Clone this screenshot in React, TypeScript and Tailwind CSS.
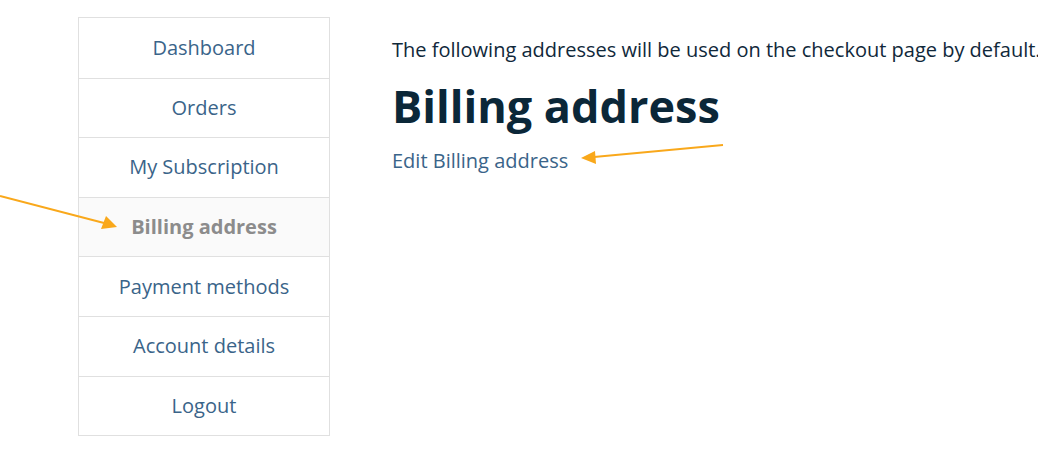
import React from "react"

const items = [
  "Dashboard",
  "Orders",
  "My Subscription",
  "Billing address",
  "Payment methods",
  "Account details",
  "Logout",
]

const active = "Billing address"

export default function App() {
  return (
    <div
      className="relative w-[1038px] h-[457px] bg-white overflow-hidden"
      style={{ fontFamily: '"Open Sans", sans-serif' }}
    >
      <div className="flex pl-[78px] pt-[17px] gap-[62px]">
        <ul className="w-[252px] shrink-0 border border-[#e0e0e0]">
          {items.map((item, i) => (
            <li
              key={item}
              className={
                "h-[59.6px] flex items-center justify-center text-[20px] " +
                (i > 0 ? "border-t border-[#e0e0e0] " : "") +
                (item === active
                  ? "bg-[#fafafa] text-[#8c8c8c] font-bold"
                  : "text-[#3a6489]")
              }
            >
              {item}
            </li>
          ))}
        </ul>
        <div className="pt-[19px] text-[#10283a]">
          <p className="text-[20px] leading-[28px] whitespace-nowrap">
            The following addresses will be used on the checkout page by default.
          </p>
          <h2 className="text-[45px] font-bold leading-[56px] mt-[14px] text-[#0b2738] whitespace-nowrap">
            Billing address
          </h2>
          <a className="block text-[20px] leading-[28px] mt-[13px] text-[#3a6489]">
            Edit Billing address
          </a>
        </div>
      </div>

      <svg
        className="absolute left-0 top-0 pointer-events-none"
        width="1038"
        height="457"
      >
        <line x1="0" y1="196" x2="104" y2="223" stroke="#f9a81b" strokeWidth="2" />
        <polygon points="117,227 101,229 106,216" fill="#f9a81b" />
        <line x1="723" y1="145" x2="594" y2="157" stroke="#f9a81b" strokeWidth="2" />
        <polygon points="581,158 595,151 596,164" fill="#f9a81b" />
      </svg>
    </div>
  )
}
